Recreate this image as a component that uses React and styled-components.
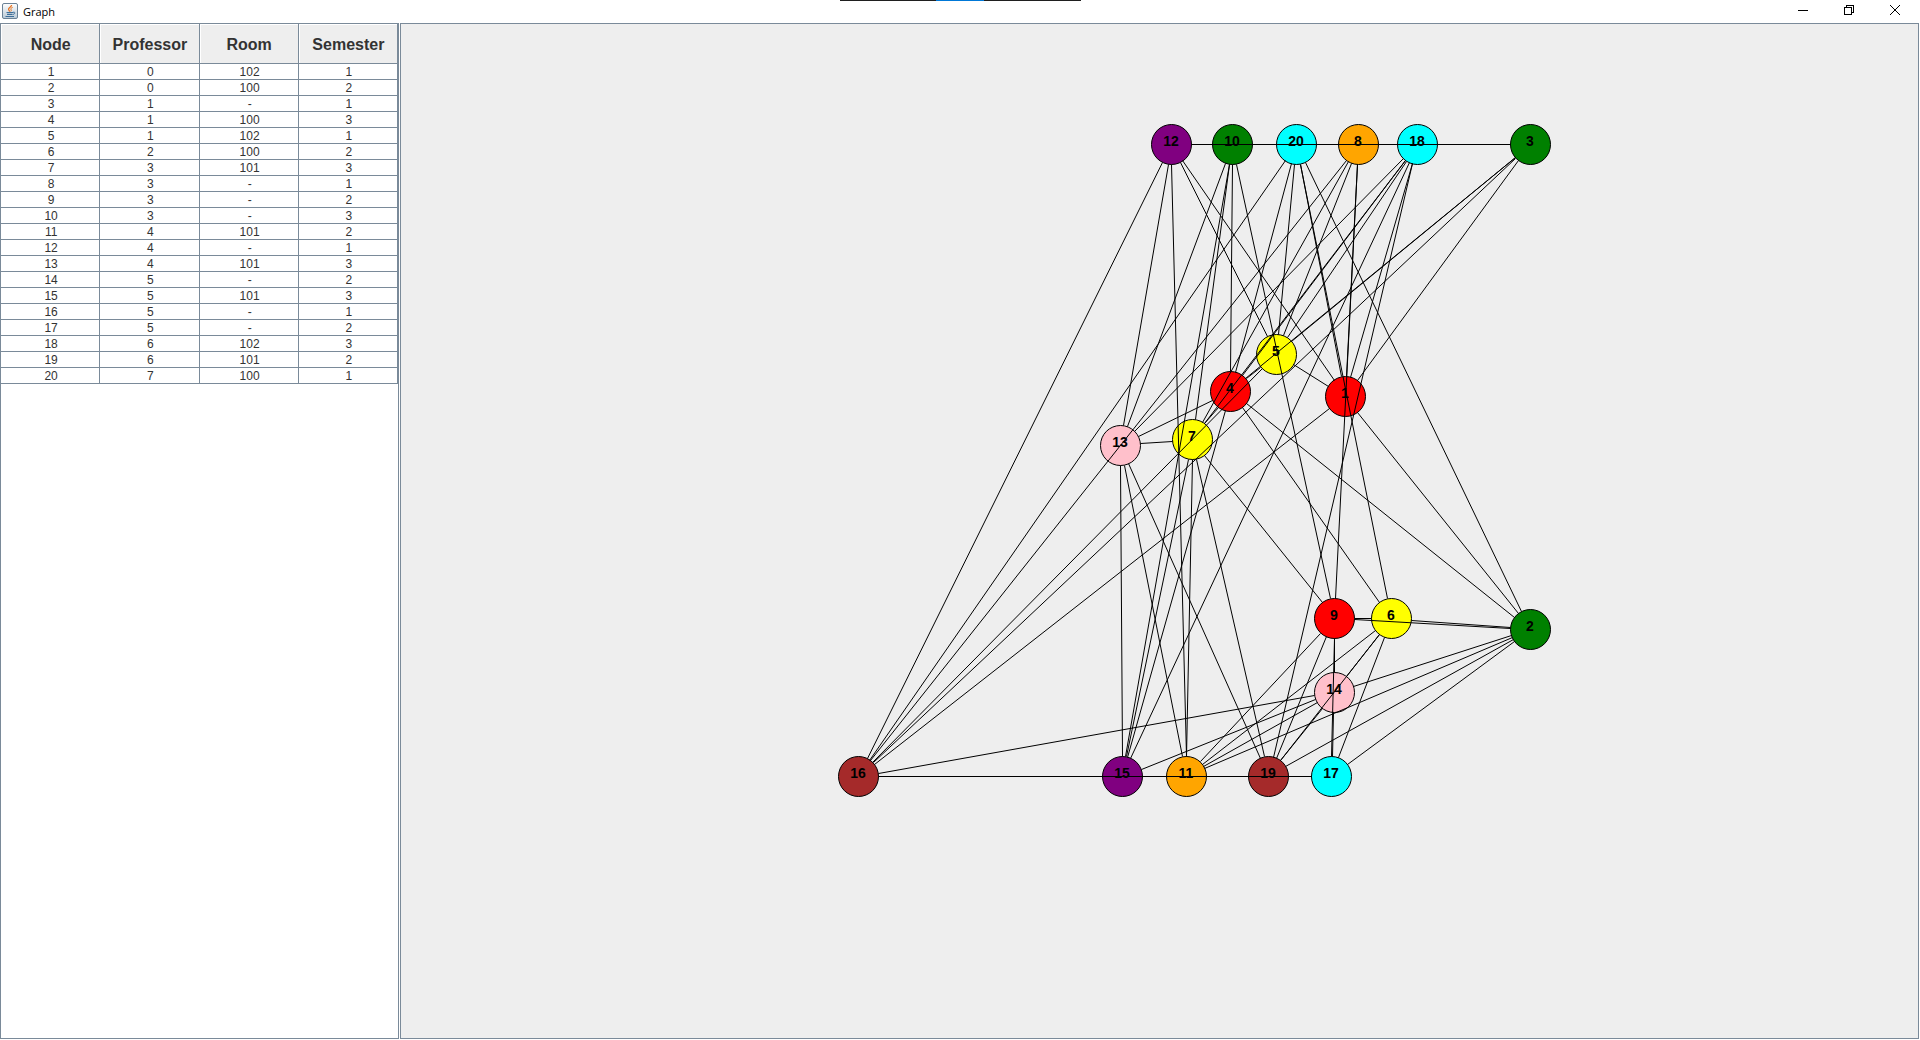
import React from "react";
import styled, { createGlobalStyle } from "styled-components";

const columns = ["Node", "Professor", "Room", "Semester"];

const classes = [
  { node: 1, professor: 0, room: "102", semester: 1, color: "red", x: 1345, y: 396 },
  { node: 2, professor: 0, room: "100", semester: 2, color: "green", x: 1530, y: 629 },
  { node: 3, professor: 1, room: "-", semester: 1, color: "green", x: 1530, y: 144 },
  { node: 4, professor: 1, room: "100", semester: 3, color: "red", x: 1230, y: 391 },
  { node: 5, professor: 1, room: "102", semester: 1, color: "yellow", x: 1276, y: 354 },
  { node: 6, professor: 2, room: "100", semester: 2, color: "yellow", x: 1391, y: 618 },
  { node: 7, professor: 3, room: "101", semester: 3, color: "yellow", x: 1192, y: 439 },
  { node: 8, professor: 3, room: "-", semester: 1, color: "orange", x: 1358, y: 144 },
  { node: 9, professor: 3, room: "-", semester: 2, color: "red", x: 1334, y: 618 },
  { node: 10, professor: 3, room: "-", semester: 3, color: "green", x: 1232, y: 144 },
  { node: 11, professor: 4, room: "101", semester: 2, color: "orange", x: 1186, y: 776 },
  { node: 12, professor: 4, room: "-", semester: 1, color: "purple", x: 1171, y: 144 },
  { node: 13, professor: 4, room: "101", semester: 3, color: "pink", x: 1120, y: 445 },
  { node: 14, professor: 5, room: "-", semester: 2, color: "pink", x: 1334, y: 692 },
  { node: 15, professor: 5, room: "101", semester: 3, color: "purple", x: 1122, y: 776 },
  { node: 16, professor: 5, room: "-", semester: 1, color: "brown", x: 858, y: 776 },
  { node: 17, professor: 5, room: "-", semester: 2, color: "cyan", x: 1331, y: 776 },
  { node: 18, professor: 6, room: "102", semester: 3, color: "cyan", x: 1417, y: 144 },
  { node: 19, professor: 6, room: "101", semester: 2, color: "brown", x: 1268, y: 776 },
  { node: 20, professor: 7, room: "100", semester: 1, color: "cyan", x: 1296, y: 144 },
];

const RADIUS = 20;

// Position of the canvas inside the window the coordinates were laid out in
const ORIGIN = { x: 401, y: 24 };

// Two classes conflict when they share a professor, a room or a semester
const conflicts = (a, b) =>
  a.professor === b.professor ||
  a.semester === b.semester ||
  (a.room !== "-" && a.room === b.room);

const edges = classes.flatMap((a, i) =>
  classes
    .slice(i + 1)
    .filter((b) => conflicts(a, b))
    .map((b) => {
      const length = Math.hypot(b.x - a.x, b.y - a.y);
      const dx = ((b.x - a.x) / length) * RADIUS;
      const dy = ((b.y - a.y) / length) * RADIUS;
      return {
        id: `${a.node}-${b.node}`,
        x1: Math.round(a.x + dx),
        y1: Math.round(a.y + dy),
        x2: Math.round(b.x - dx),
        y2: Math.round(b.y - dy),
      };
    })
);

const JavaIcon = () => (
  <svg width="16" height="16" viewBox="0 0 16 16" aria-hidden="true">
    <defs>
      <linearGradient id="java-tile" x1="0" y1="0" x2="0" y2="1">
        <stop offset="0" stopColor="#ffffff" />
        <stop offset="1" stopColor="#b9c9d6" />
      </linearGradient>
    </defs>
    <rect x="0.5" y="0.5" width="15" height="15" rx="1.5" fill="url(#java-tile)" stroke="#6b8296" />
    <path d="M9.6 2C9.6 4 6.4 4.4 6.6 6.3C6.7 7.2 7.5 7.7 7.8 8.6" fill="none" stroke="#e8711c" strokeWidth="1.3" />
    <path d="M10.7 4.3C9 5 8.3 5.8 9.1 6.8C9.5 7.4 9.2 8 8.8 8.4" fill="none" stroke="#e8711c" />
    <path d="M4.5 9.5H11M5 11.3H10.500M3.5 13.5H12" fill="none" stroke="#3f6f99" strokeWidth="1.2" />
    <path d="M11 9.3C13.5 8.5 13.5 11 10.8 11.5" fill="none" stroke="#3f6f99" />
  </svg>
);

const MinimizeIcon = () => (
  <svg width="10" height="10" viewBox="0 0 10 10" shapeRendering="crispEdges" aria-hidden="true">
    <path d="M0 5.5H10" stroke="#000" />
  </svg>
);

const RestoreIcon = () => (
  <svg width="10" height="10" viewBox="0 0 10 10" shapeRendering="crispEdges" aria-hidden="true">
    <path d="M0.5 2.5H7.5V9.5H0.5ZM2.5 2.5V0.5H9.5V7.5H7.5" fill="none" stroke="#000" />
  </svg>
);

const CloseIcon = () => (
  <svg width="10" height="10" viewBox="0 0 10 10" aria-hidden="true">
    <path d="M0 0L10 10M10 0L0 10" stroke="#000" />
  </svg>
);

const App = () => {
  return (
    <Window>
      <GlobalStyle />
      <CaptureBar />

      <TitleBar>
        <JavaIcon />
        <Title>Graph</Title>
        <WindowButtons>
          <WindowButton type="button" aria-label="Minimize">
            <MinimizeIcon />
          </WindowButton>
          <WindowButton type="button" aria-label="Restore">
            <RestoreIcon />
          </WindowButton>
          <WindowButton type="button" aria-label="Close">
            <CloseIcon />
          </WindowButton>
        </WindowButtons>
      </TitleBar>

      <Content>
        {/* Class list */}
        <TablePane>
          <Table>
            <thead>
              <tr>
                {columns.map((column) => (
                  <HeaderCell key={column}>{column}</HeaderCell>
                ))}
              </tr>
            </thead>
            <tbody>
              {classes.map((item) => (
                <tr key={item.node}>
                  <Cell>{item.node}</Cell>
                  <Cell>{item.professor}</Cell>
                  <Cell>{item.room}</Cell>
                  <Cell>{item.semester}</Cell>
                </tr>
              ))}
            </tbody>
          </Table>
        </TablePane>

        {/* Conflict graph */}
        <GraphPane>
          <Graph>
            <g transform={`translate(${-ORIGIN.x} ${-ORIGIN.y})`}>
              {classes.map((item) => (
                <Vertex key={item.node} cx={item.x + 0.5} cy={item.y + 0.5} r={RADIUS} fill={item.color} />
              ))}
              {edges.map(({ id, ...line }) => (
                <Edge key={id} {...line} transform="translate(0.5 0.5)" />
              ))}
              {classes.map((item) => (
                <VertexLabel key={item.node} x={item.x} y={item.y + 2}>
                  {item.node}
                </VertexLabel>
              ))}
            </g>
          </Graph>
        </GraphPane>
      </Content>
    </Window>
  );
};

export default App;

// Styled Components
const GlobalStyle = createGlobalStyle`
  * {
    box-sizing: border-box;
  }

  body {
    margin: 0;
    background-color: #fff;
    font-family: "Liberation Sans", Arial, sans-serif;
  }
`;

const Window = styled.div`
  display: flex;
  flex-direction: column;
  height: 100vh;
  overflow: hidden;
`;

const CaptureBar = styled.div`
  position: absolute;
  top: 0;
  left: 50%;
  width: 241px;
  height: 1px;
  transform: translateX(-120px);
  background: linear-gradient(to right, #1f1f1f 96px, #0078d7 96px, #0078d7 144px, #1f1f1f 144px);
`;

const TitleBar = styled.header`
  display: flex;
  align-items: center;
  height: 23px;
  padding: 0 2px 1px;
  background-color: #fff;
`;

const Title = styled.span`
  margin-left: 5px;
  padding-top: 1px;
  font-family: "Open Sans", "Noto Sans", sans-serif;
  font-size: 11px;
  line-height: 16px;
  color: #000;
`;

const WindowButtons = styled.div`
  display: flex;
  height: 100%;
  margin-left: auto;
`;

const WindowButton = styled.button`
  display: flex;
  align-items: center;
  justify-content: center;
  width: 46px;
  height: 20px;
  padding: 0;
  border: none;
  background: none;
`;

const Content = styled.main`
  display: flex;
  flex: 1;
  gap: 1px;
  min-height: 0;
  padding: 0 1px 1px 0;
`;

const TablePane = styled.section`
  flex: 0 0 399px;
  border: 1px solid #7a8a99;
  background-color: #fff;
`;

const Table = styled.table`
  width: 397px;
  table-layout: fixed;
  border-collapse: separate;
  border-spacing: 0;
  color: #333;
  text-align: center;
`;

const HeaderCell = styled.th`
  height: 40px;
  padding: 2px 0 0 1px;
  border-right: 1px solid #7a8a99;
  border-bottom: 1px solid #7a8a99;
  box-shadow: inset 1px 1px #fff;
  background-color: #eee;
  font-size: 16px;
  line-height: 20px;
`;

const Cell = styled.td`
  height: 16px;
  padding: 1px 0 0 2px;
  border-right: 1px solid #7a8a99;
  border-bottom: 1px solid #7a8a99;
  font-size: 12px;
  line-height: 14px;
`;

const GraphPane = styled.section`
  flex: 1;
  min-width: 0;
  border: 1px solid #7a8a99;
  background-color: #eee;
`;

const Graph = styled.svg`
  display: block;
  width: 100%;
  height: 100%;
`;

const Vertex = styled.circle`
  stroke: #000;
`;

const Edge = styled.line`
  stroke: #000;
`;

const VertexLabel = styled.text`
  font-size: 14px;
  font-weight: bold;
  text-anchor: middle;
  fill: #000;
`;
